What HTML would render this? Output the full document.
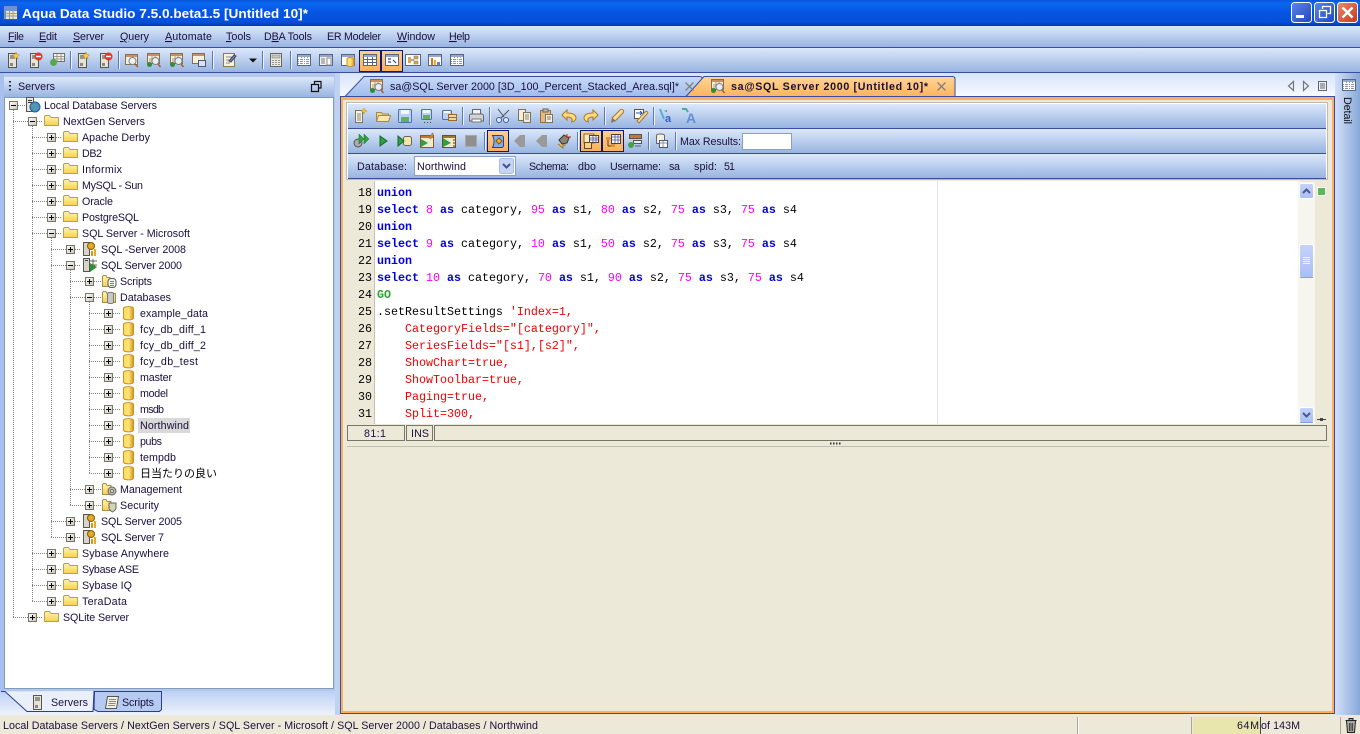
<!DOCTYPE html>
<html><head><meta charset="utf-8"><title>Aqua Data Studio</title>
<style>
html,body{margin:0;padding:0;background:#ece9d8;overflow:hidden}
svg{display:block;position:absolute;left:0;top:0}
text{font-family:"Liberation Sans","Noto Sans CJK JP",sans-serif;font-size:10.7px;fill:#1a0f3c}
.c text,text.c{font-family:"Liberation Mono",monospace;font-size:11.67px;fill:#000}
.k{fill:#0000e0;font-weight:bold}
.n{fill:#ff00ff}
.r{fill:#f00000}
.g{fill:#2f9f2f;font-weight:bold}
</style></head><body>
<svg width="1360" height="734" viewBox="0 0 1360 734" xmlns="http://www.w3.org/2000/svg">
<defs>
<linearGradient id="title" x1="0" y1="0" x2="0" y2="1"><stop offset="0" stop-color="#0a56d8"/><stop offset=".12" stop-color="#0a66f0"/><stop offset=".5" stop-color="#0554e2"/><stop offset=".85" stop-color="#0450d8"/><stop offset="1" stop-color="#003cb0"/></linearGradient>
<linearGradient id="bar" x1="0" y1="0" x2="0" y2="1"><stop offset="0" stop-color="#dce8fb"/><stop offset="1" stop-color="#98b4e0"/></linearGradient>
<linearGradient id="tabrow" x1="0" y1="0" x2="0" y2="1"><stop offset="0" stop-color="#d7e4fa"/><stop offset="1" stop-color="#f8fafe"/></linearGradient>
<linearGradient id="tab1" x1="0" y1="0" x2="0" y2="1"><stop offset="0" stop-color="#c8daf8"/><stop offset="1" stop-color="#a0bcec"/></linearGradient>
<linearGradient id="tab2" x1="0" y1="0" x2="0" y2="1"><stop offset="0" stop-color="#ffd596"/><stop offset="1" stop-color="#fdb45e"/></linearGradient>
<linearGradient id="side" x1="0" y1="0" x2="1" y2="0"><stop offset="0" stop-color="#d2e0f8"/><stop offset="1" stop-color="#88a8d8"/></linearGradient>
<linearGradient id="lower" x1="0" y1="0" x2="0" y2="1"><stop offset="0" stop-color="#bdd0f4"/><stop offset="1" stop-color="#edf2fb"/></linearGradient>
<linearGradient id="fgrad" x1="0" y1="0" x2="0" y2="1"><stop offset="0" stop-color="#fff5b0"/><stop offset="1" stop-color="#f5d050"/></linearGradient>
<linearGradient id="dbg" x1="0" y1="0" x2="1" y2="0"><stop offset="0" stop-color="#ffd84c"/><stop offset=".5" stop-color="#ffe680"/><stop offset="1" stop-color="#d8960c"/></linearGradient>
<linearGradient id="bb" x1="0" y1="0" x2="1" y2="1"><stop offset="0" stop-color="#fff"/><stop offset="1" stop-color="#c8c4b4"/></linearGradient>
<linearGradient id="sel" x1="0" y1="0" x2="0" y2="1"><stop offset="0" stop-color="#ffd090"/><stop offset="1" stop-color="#fdae5c"/></linearGradient>
<linearGradient id="sb" x1="0" y1="0" x2="0" y2="1"><stop offset="0" stop-color="#c6d3fb"/><stop offset="1" stop-color="#aabef5"/></linearGradient>
<linearGradient id="btn" x1="0" y1="0" x2="1" y2="1"><stop offset="0" stop-color="#5c86ea"/><stop offset="1" stop-color="#2046c0"/></linearGradient>
<linearGradient id="close" x1="0" y1="0" x2="1" y2="1"><stop offset="0" stop-color="#ec8a6a"/><stop offset="1" stop-color="#c23a18"/></linearGradient>

<g id="minus"><rect x=".5" y=".5" width="8" height="8" fill="url(#bb)" stroke="#77756a"/><path d="M2 4.500h5" stroke="#000"/></g>
<g id="plus"><rect x=".5" y=".5" width="8" height="8" fill="url(#bb)" stroke="#77756a"/><path d="M2 4.500h5M4.500 2v5" stroke="#000"/></g>
<g id="folder"><path d="M.5 3.500V12.500H14.500V4.500H7L5.500 2.500H1.500z" fill="url(#fgrad)" stroke="#b8a050"/></g>
<g id="db"><path d="M1.500 2.500C1.500 0 11.500 0 11.500 2.500V12C11.500 14.500 1.500 14.500 1.500 12z" fill="url(#dbg)" stroke="#c8922a"/></g>
<g id="sqlicon"><rect x="1.500" y="1.500" width="6" height="13" fill="#d8d4c8" stroke="#555"/><rect x="3" y="3" width="3" height="1" fill="#444"/><path d="M8 4h7M8 8h7M11 2v10" stroke="#665" fill="none"/><path d="M8 6l7 4-7 5z" fill="#2d9030"/></g>
<g id="sqlicon2"><rect x="1.500" y="1.500" width="6" height="13" fill="#d8d4c8" stroke="#555"/><circle cx="9" cy="5" r="3.500" fill="#e8a820" stroke="#7a5a10"/><rect x="9" y="10" width="2" height="5" fill="#d89a10"/><rect x="12" y="8" width="2" height="7" fill="#e8a820"/></g>
<g id="scripts"><path d="M.5 3.500V13.500H8V4.500H5L4 2.500H1.500z" fill="url(#fgrad)" stroke="#a09050"/><rect x="6" y="5.500" width="8" height="9" rx="3" fill="#f8f6f0" stroke="#555"/><path d="M8 8.500h4M8 10.500h4M8 12.500h4" stroke="#6a7ab0"/></g>
<g id="dbs"><path d="M.5 3.500V13.500H13.500V4.500H5L4 2.500H1.500z" fill="url(#fgrad)" stroke="#a09050"/><path d="M5.500 4.500C5.500 3 11.500 3 11.500 4.500V13C11.500 15 5.500 15 5.500 13z" fill="#c8c8c8" stroke="#777"/></g>
<g id="gear"><path d="M.5 3.500V13.500H9V4.500H5L4 2.500H1.500z" fill="url(#fgrad)" stroke="#a09050"/><circle cx="10" cy="10" r="4" fill="#c4bfa8" stroke="#666"/><circle cx="10" cy="10" r="1.500" fill="#fff" stroke="#666"/></g>
<g id="shield"><path d="M.5 3.500V13.500H9V4.500H5L4 2.500H1.500z" fill="url(#fgrad)" stroke="#a09050"/><path d="M7 6h7v5c0 2-2 3-3.500 4C9 14 7 13 7 11z" fill="#d8d2b4" stroke="#666"/></g>
<g id="root"><rect x="1.500" y=".5" width="7" height="14" fill="#e8e6dc" stroke="#555"/><rect x="3" y="3" width="4" height="1" fill="#333"/><rect x="3" y="5" width="4" height="1" fill="#333"/><circle cx="10" cy="10" r="5" fill="#4a90c8" stroke="#24608c"/><path d="M7 9c2-2 3 0 5-1M8 13c2-1 2-3 4-2" stroke="#60b050" fill="none"/></g>

<g id="srv"><rect x="3.500" y="1.500" width="8" height="14" fill="#e8e4d4" stroke="#555"/><path d="M5 4h5M5 6h5" stroke="#444"/><rect x="5" y="11" width="3" height="3" fill="#888"/></g>
<g id="srvn"><use href="#srv"/><path d="M11 0l1 2.500 2.500.5-2 1.500.5 2.500-2-1.500-2 1.500.5-2.500-2-1.500 2.500-.5z" fill="#ffd040" stroke="#b08820" stroke-width=".5"/></g>
<g id="srvx"><use href="#srv"/><circle cx="11.500" cy="4.500" r="4" fill="#e03828"/><path d="M9 4.500h5" stroke="#fff" stroke-width="1.500"/></g>
<g id="grid"><rect x="1.500" y="2.500" width="13" height="11" fill="#f6f4ec" stroke="#6a6a70"/><rect x="2" y="3" width="12" height="2" fill="#8a98c8"/><path d="M2 7.500h12M2 10.500h12M5.500 5v8M8.500 5v8M11.500 5v8" stroke="#9aa0b8"/></g>
<g id="gridgr"><rect x="4.500" y="1.500" width="11" height="8" fill="#f6f4ec" stroke="#70706a"/><path d="M5 4.500h10M5 7h10M8 2v7M12 2v7" stroke="#a09888"/><circle cx="4.500" cy="10.500" r="3.500" fill="#54a850"/></g>
<g id="mag"><rect x="1.500" y="2.500" width="12" height="10" fill="#f4efe0" stroke="#8a7048"/><rect x="2" y="3" width="11" height="2" fill="#c89060"/><circle cx="8.500" cy="9" r="3.500" fill="#eef2f8" stroke="#808080"/><path d="M11 12l3 3" stroke="#a06030" stroke-width="1.500"/></g>
<g id="magb"><rect x="1.500" y="1.500" width="12" height="10" fill="#f4efe0" stroke="#8a7048"/><rect x="2" y="2" width="11" height="2" fill="#c89060"/><path d="M3 7h9M3 9h9M6 4v7M9 4v7" stroke="#b09878"/><circle cx="9.500" cy="9" r="3.500" fill="#e8eef4" stroke="#808080"/><path d="M12 12l2.500 3" stroke="#a06030" stroke-width="1.500"/><circle cx="3.500" cy="12.500" r="2.500" fill="#308a38"/></g>
<g id="win"><rect x="1.500" y="1.500" width="12" height="10" fill="#f4efe0" stroke="#8a7048"/><rect x="2" y="2" width="11" height="2" fill="#c89060"/><rect x="7.500" y="8.500" width="7" height="6" fill="#d8e4f4" stroke="#557"/></g>
<g id="note"><rect x="2.500" y="1.500" width="11" height="13" fill="#f8f2dc" stroke="#8a7a50"/><path d="M5 5h6M5 8h6M5 11h4" stroke="#8a8a8a"/><path d="M8 9l5-6 2 1-5 6z" fill="#6a90c8" stroke="#445"/></g>
<g id="calc"><rect x="2.500" y="1.500" width="11" height="13" fill="#eceae0" stroke="#666"/><rect x="4" y="3" width="8" height="3" fill="#c8c8c0" stroke="#777" stroke-width=".5"/><path d="M4.500 8.500h1M7.500 8.500h1M10.500 8.500h1M4.500 10.500h1M7.500 10.500h1M10.500 10.500h1M4.500 12.500h1M7.500 12.500h1M10.500 12.500h1" stroke="#444"/></g>
<g id="table"><rect x="1.500" y="2.500" width="13" height="11" fill="#fff" stroke="#556680"/><rect x="2" y="3" width="12" height="2" fill="#98a8cc"/><path d="M2 7.500h12M2 9.500h12M2 11.500h12M5.500 5v8M8.500 5v8M11.500 5v8" stroke="#8a94b0" stroke-dasharray="1 1"/></g>
<g id="form"><rect x="1.500" y="2.500" width="13" height="11" fill="#f4f4ec" stroke="#556680"/><rect x="2" y="3" width="12" height="2" fill="#98a8cc"/><rect x="9" y="6" width="4" height="7" fill="#fff" stroke="#889"/><path d="M3 7h4M3 9h4M3 11h4" stroke="#777"/></g>
<g id="tdb"><rect x="1.500" y="2.500" width="13" height="11" fill="#fff" stroke="#556680"/><rect x="2" y="3" width="12" height="2" fill="#98a8cc"/><path d="M7 7c0-2 7-2 7 0v6c0 2-7 2-7 0z" fill="url(#dbg)" stroke="#c8922a"/></g>
<g id="tgrid"><rect x="1.500" y="2.500" width="13" height="11" fill="#fff" stroke="#556680"/><rect x="2" y="3" width="12" height="2" fill="#98a8cc"/><path d="M2 7.500h12M2 10.500h12M5.500 5v8M10.500 5v8" stroke="#556680"/></g>
<g id="tbuild"><rect x="1.500" y="2.500" width="13" height="11" fill="#fff" stroke="#556680"/><rect x="2" y="3" width="12" height="2" fill="#98a8cc"/><path d="M4 7h3M4 10h3M9 8l3 3" stroke="#2a4a90" stroke-width="1.200"/></g>
<g id="ttree"><rect x=".5" y="2.500" width="15" height="11" fill="#fff" stroke="#556680"/><rect x="3" y="5" width="3" height="6" fill="#d8a848"/><rect x="9" y="4" width="4" height="3" fill="#d8a848" stroke="#777" stroke-width=".5"/><rect x="9" y="9" width="4" height="3" fill="#d8a848" stroke="#777" stroke-width=".5"/><path d="M6 8h3" stroke="#555"/></g>
<g id="tbar"><rect x="1.500" y="2.500" width="13" height="11" fill="#fff" stroke="#556680"/><rect x="2" y="3" width="12" height="2" fill="#98a8cc"/><rect x="4" y="6" width="2" height="7" fill="#e07020"/><rect x="7" y="8" width="2" height="5" fill="#e8b020"/><rect x="10" y="10" width="3" height="3" fill="#6080c0"/></g>
<g id="newdoc"><path d="M3.500 2.500h7v12h-7z" fill="#f8f2e0" stroke="#7a7458"/><path d="M5 6h4M5 8h4M5 10h4M5 12h4" stroke="#888"/><path d="M12 0l1 2 2 1-2 1-1 2-1-2-2-1 2-1z" fill="#f8c830" stroke="#b89020" stroke-width=".5"/></g>
<g id="open"><path d="M1.500 4.500h5l1 1.500h6v7h-12z" fill="#f0d890" stroke="#a08a50"/><path d="M1.500 13.500l2-6h12l-2 6z" fill="#fbe8a4" stroke="#a08a50"/></g>
<g id="save"><rect x="1.500" y="1.500" width="13" height="13" rx="1" fill="#bcd0f0" stroke="#5070b0"/><rect x="4" y="2" width="8" height="4" fill="#f4f6fa"/><rect x="4" y="9" width="8" height="5" fill="#60b060"/></g>
<g id="saveas"><rect x="2.500" y="1.500" width="10" height="10" rx="1" fill="#bcd0f0" stroke="#5070b0"/><rect x="4" y="2" width="7" height="3" fill="#f4f6fa"/><rect x="4" y="7" width="7" height="4" fill="#60b060"/><path d="M5 14.500h1M8 14.500h1M11 14.500h1" stroke="#444"/></g>
<g id="saveall"><rect x="1.500" y="2.500" width="9" height="9" rx="1" fill="#bcd0f0" stroke="#5070b0"/><rect x="3" y="3" width="6" height="2" fill="#fff"/><rect x="7.500" y="6.500" width="8" height="6" fill="#f4d49c" stroke="#a06828"/><path d="M8 9.500h7" stroke="#a06828"/></g>
<g id="print"><rect x="4.500" y="1.500" width="8" height="6" fill="#f4f4f4" stroke="#666"/><path d="M1.500 8c0-2 2-2 2-2h10s2 0 2 2v5h-14z" fill="#cfd4dc" stroke="#666"/><rect x="4" y="11" width="9" height="3" fill="#fff" stroke="#777"/></g>
<g id="cut"><path d="M3 1l6 8M14 2L6 10" stroke="#555" fill="none"/><circle cx="4" cy="12" r="2.500" fill="#dfe8f8" stroke="#3a5ca0"/><circle cx="11" cy="12" r="2.500" fill="#dfe8f8" stroke="#3a5ca0"/></g>
<g id="copy"><path d="M1.500 1.500h7v11h-7z" fill="#f6eed8" stroke="#7a7458"/><path d="M6.500 4.500h7v10h-7z" fill="#f6eed8" stroke="#7a7458"/><path d="M8 7h4M8 9h4M8 11h4" stroke="#888"/></g>
<g id="paste"><rect x="1.500" y="2.500" width="10" height="12" fill="#e8b87c" stroke="#907040"/><rect x="4" y="1" width="5" height="3" fill="#bbb" stroke="#666"/><path d="M6.500 6.500h7v8h-7z" fill="#f8f2e0" stroke="#7a7458"/><path d="M8 9h4M8 11h4" stroke="#777"/></g>
<g id="undo"><path d="M1 7l5-5v3c4 0 9 1 9 5 0 2-2 4-5 4 2-1 2-5-4-5v3z" fill="#fbdc80" stroke="#b07820"/></g>
<g id="redo"><path d="M15 7l-5-5v3c-4 0-9 1-9 5 0 2 2 4 5 4-2-1-2-5 4-5v3z" fill="#fbdc80" stroke="#b07820"/></g>
<g id="pencil"><path d="M2 10l8-8c2-2 5 1 3 3l-8 8z" fill="#fbdc90" stroke="#a07a40"/><path d="M2 10l3 3-4 2z" fill="#8a6a58"/></g>
<g id="pencil2"><rect x="1.500" y="1.500" width="9" height="9" fill="#fff" stroke="#555"/><path d="M3 5h6l-2-2M9 5l-2 2" stroke="#2050a0" fill="none"/><path d="M4 13l8-9c2-2 4 1 2 2l-8 9z" fill="#fbdc90" stroke="#a07a40"/></g>
<g id="aa1"><path d="M1 1l4 10" stroke="#50b0d8" stroke-width="2"/><path d="M5 3l3-1v2z" fill="#50a040"/><text x="6" y="14" style="font-size:11px;fill:#3860c8;font-weight:bold">a</text></g>
<g id="aa2"><text x="5" y="15" style="font-size:14px;fill:#6090d8;font-weight:bold">A</text><path d="M1 1h4l2 3" stroke="#50a890" stroke-width="2" fill="none"/></g>
<g id="run2"><circle cx="5" cy="10" r="4" fill="#aaa" stroke="#555"/><path d="M6 1l5 5-5 5zM11 1l5 5-5 5z" fill="#30a040" stroke="#18682a" stroke-width=".5"/></g>
<g id="run"><path d="M5 3l7 5-7 5z" fill="#30a040" stroke="#18682a"/></g>
<g id="runm"><rect x="6.500" y="3.500" width="8" height="9" rx="2" fill="#f4e6a8" stroke="#666"/><path d="M1 3l6 5-6 5z" fill="#30a040" stroke="#18682a"/></g>
<g id="runp"><rect x="1.500" y="2.500" width="13" height="12" fill="#f0ead0" stroke="#8a5a28"/><rect x="2" y="3" width="12" height="2" fill="#b87830"/><path d="M2 6l7 4-7 4z" fill="#30a040"/><path d="M14 0l-3 6" stroke="#c08040" stroke-width="2"/></g>
<g id="runq"><rect x="1.500" y="2.500" width="13" height="12" fill="#f0ead0" stroke="#5a5a28"/><rect x="2" y="3" width="12" height="2" fill="#987830"/><path d="M2 5l8 5-8 4z" fill="#30a040"/><path d="M12 7h2M12 10h2M12 13h2" stroke="#c06010" stroke-width="1.500"/></g>
<g id="stop"><rect x="2.500" y="2.500" width="11" height="11" fill="#8f8f8f" stroke="#a8a8a8"/></g>
<g id="conn"><path d="M2.500 2.500h9c2 0 2 2 2 2v8c0 2-2 2-2 2h-9c2-3 2-9 0-12z" fill="#7fb0e8" stroke="#204890"/><path d="M6 8l3-3 3 3-3 3z" fill="#f8b030" stroke="#905010"/></g>
<g id="lt"><path d="M2 8l6-6h5v12H8z" fill="#9a9a9a"/></g>
<g id="plug"><path d="M3 7l5-5 5 3-2 5-5 1z" fill="#8a8470" stroke="#333"/><path d="M11 1v4M15 4h-4" stroke="#d02020"/><path d="M2 11l5 4v-3h3" fill="#f8c848" stroke="#a07020"/></g>
<g id="sel1"><rect x="1" y="1" width="10" height="9" fill="#f8e8c0" stroke="#8a6a28"/><rect x="6.500" y="2.500" width="9" height="7" fill="#fff" stroke="#444"/><path d="M7 5h8M7 7h8M10 3v6M13 3v6" stroke="#6a70a0"/><rect x="1.500" y="9.500" width="7" height="6" fill="#f6d090" stroke="#6a4a18"/></g>
<g id="sel2"><rect x="6.500" y="1.500" width="9" height="9" fill="#fff" stroke="#444"/><path d="M7 4h8M7 7h8M10 2v8M13 2v8" stroke="#6a70a0"/><path d="M1.500 5.500h4M3 6v7M3 13h4" stroke="#5a3a10"/><rect x="1" y="4" width="4" height="3" fill="#e09040"/><rect x="6" y="11" width="4" height="3" fill="#e09040"/></g>
<g id="rs"><rect x="2.500" y="1.500" width="12" height="4" fill="#c87830" stroke="#555"/><rect x="6.500" y="7.500" width="8" height="3" fill="#eee" stroke="#555"/><circle cx="4" cy="12" r="3" fill="#48a048"/><path d="M8 13h6" stroke="#666"/></g>
<g id="script"><path d="M3.500 2.500c0-2 8-2 8 0v8h-8z" fill="#f4f0e4" stroke="#666"/><rect x="6.500" y="7.500" width="8" height="7" fill="#fff" stroke="#557"/><path d="M7 10h7M10 8v6" stroke="#79a"/></g>
<g id="sep"><path d="M.5 0v18" stroke="#5c78b8"/><path d="M1.500 0v18" stroke="#eef3fc"/></g>
<g id="x"><path d="M.5.5l8 8M8.500.5l-8 8" stroke="#808080" stroke-width="1.300"/></g>
<g id="selb"><rect x=".5" y=".5" width="21" height="21" fill="url(#sel)" stroke="#0a1a70"/></g>
</defs>

<!-- Title bar -->
<rect width="1360" height="26" fill="url(#title)"/>
<g transform="translate(3,5)"><rect x=".5" y=".5" width="14" height="14" fill="#6f93cc" stroke="#345a9c"/><rect x="3" y="6" width="11" height="8" fill="#f6e6b4"/><path d="M3 8.500h11M3 11h11M6.500 6v8M10 6v8" stroke="#8a9ec0"/></g>
<text x="22" y="18" textLength="286" lengthAdjust="spacingAndGlyphs" style="font-size:13px;font-weight:bold;fill:#fff">Aqua Data Studio 7.5.0.beta1.5 [Untitled 10]*</text>
<rect x="1291.500" y="2.500" width="20" height="20" rx="3" fill="url(#btn)" stroke="#fff"/><rect x="1296" y="15" width="8" height="3" fill="#fff"/>
<rect x="1314.500" y="2.500" width="20" height="20" rx="3" fill="url(#btn)" stroke="#fff"/><path d="M1322.500 9V6.500h8v7h-3M1319.500 10.500h7v7h-7z" fill="none" stroke="#fff" stroke-width="1.300"/>
<rect x="1337.500" y="2.500" width="20" height="20" rx="3" fill="url(#close)" stroke="#fff"/><path d="M1342.500 7.500l10 10M1352.500 7.500l-10 10" stroke="#fff" stroke-width="2.400"/>

<!-- Menu -->
<rect y="26" width="1360" height="21" fill="url(#bar)"/>
<rect y="47" width="1360" height="1" fill="#3a4ea0"/>
<g>
<text x="8" y="40" textLength="16"><tspan text-decoration="underline">F</tspan>ile</text>
<text x="39" y="40" textLength="18"><tspan text-decoration="underline">E</tspan>dit</text>
<text x="73" y="40" textLength="31"><tspan text-decoration="underline">S</tspan>erver</text>
<text x="120" y="40" textLength="29"><tspan text-decoration="underline">Q</tspan>uery</text>
<text x="165" y="40" textLength="47"><tspan text-decoration="underline">A</tspan>utomate</text>
<text x="226" y="40" textLength="25"><tspan text-decoration="underline">T</tspan>ools</text>
<text x="264" y="40" textLength="48">D<tspan text-decoration="underline">B</tspan>A Tools</text>
<text x="327" y="40" textLength="54">ER Modeler</text>
<text x="397" y="40" textLength="38"><tspan text-decoration="underline">W</tspan>indow</text>
<text x="449" y="40" textLength="21"><tspan text-decoration="underline">H</tspan>elp</text>
</g>

<!-- Main toolbar -->
<rect y="48" width="1360" height="24" fill="url(#bar)"/>
<rect y="72" width="1360" height="1" fill="#3a4ea0"/>
<use href="#srvn" x="5" y="52"/><use href="#srvx" x="27" y="52"/><use href="#gridgr" x="49" y="52"/>
<use href="#sep" x="70" y="51"/>
<use href="#srvn" x="75" y="52"/><use href="#srvx" x="97" y="52"/>
<use href="#sep" x="118" y="51"/>
<use href="#mag" x="124" y="52"/><use href="#magb" x="146" y="52"/><use href="#magb" x="169" y="52"/><use href="#win" x="191" y="52"/>
<use href="#sep" x="212" y="51"/>
<use href="#note" x="221" y="52"/><path d="M249 58.500h8l-4 4z" fill="#111"/>
<use href="#sep" x="262" y="51"/>
<use href="#calc" x="268" y="52"/>
<use href="#sep" x="290" y="51"/>
<use href="#table" x="296" y="52"/><use href="#form" x="318" y="52"/><use href="#tdb" x="340" y="52"/>
<use href="#selb" x="359" y="50"/><use href="#selb" x="381" y="50"/>
<use href="#tgrid" x="362" y="52"/><use href="#tbuild" x="384" y="52"/>
<use href="#ttree" x="405" y="52"/><use href="#tbar" x="427" y="52"/><use href="#table" x="449" y="52"/>

<!-- Left panel -->
<rect y="73" width="340" height="642" fill="#b4c8ee"/>
<rect x="0" y="73" width="4" height="642" fill="#a8c0ee"/>
<rect x="335" y="73" width="5" height="642" fill="#c0d2f2"/>
<rect x="4" y="77" width="330" height="20" fill="url(#bar)"/>
<path d="M10 81v1.500M10 85v1.500M10 89v1.500" stroke="#223" stroke-width="2"/>
<text x="18" y="90" textLength="37">Servers</text>
<path d="M311.500 84.500h7v7h-7zM314.500 84v-2.500h6.500v6.500h-2" fill="none" stroke="#111" stroke-width="1.200"/>
<rect x="4.500" y="97.500" width="329" height="591" fill="#fff" stroke="#7f9db9"/>

<!-- tree lines -->
<g stroke="#808080" stroke-dasharray="1 1" fill="none">
<path d="M13.500 110V617M32.500 126V601M51.500 238V537M70.500 270V505M89.500 302V473"/>
<path d="M18 105.500h7M13 121.500h15M37 121.500h6M13 617.500h15M37 617.500h6"/>
<path d="M32 137.500h15M32 153.500h15M32 169.500h15M32 185.500h15M32 201.500h15M32 217.500h15M32 233.500h15M32 553.500h15M32 569.500h15M32 585.500h15M32 601.500h15"/>
<path d="M56 137.500h6M56 153.500h6M56 169.500h6M56 185.500h6M56 201.500h6M56 217.500h6M56 233.500h6M56 553.500h6M56 569.500h6M56 585.500h6M56 601.500h6"/>
<path d="M51 249.500h15M51 265.500h15M51 521.500h15M51 537.500h15M75 249.500h6M75 265.500h6M75 521.500h6M75 537.500h6"/>
<path d="M70 281.500h15M70 297.500h15M70 489.500h15M70 505.500h15M94 281.500h7M94 297.500h7M94 489.500h7M94 505.500h7"/>
<path d="M89 313.500h15M89 329.500h15M89 345.500h15M89 361.500h15M89 377.500h15M89 393.500h15M89 409.500h15M89 425.500h15M89 441.500h15M89 457.500h15M89 473.500h15"/>
<path d="M113 313.500h8M113 329.500h8M113 345.500h8M113 361.500h8M113 377.500h8M113 393.500h8M113 409.500h8M113 425.500h8M113 441.500h8M113 457.500h8M113 473.500h8"/>
</g>

<!-- tree boxes -->
<use href="#minus" x="9" y="101"/><use href="#minus" x="28" y="117"/><use href="#plus" x="28" y="613"/>
<use href="#plus" x="47" y="133"/><use href="#plus" x="47" y="149"/><use href="#plus" x="47" y="165"/><use href="#plus" x="47" y="181"/><use href="#plus" x="47" y="197"/><use href="#plus" x="47" y="213"/><use href="#minus" x="47" y="229"/><use href="#plus" x="47" y="549"/><use href="#plus" x="47" y="565"/><use href="#plus" x="47" y="581"/><use href="#plus" x="47" y="597"/>
<use href="#plus" x="66" y="245"/><use href="#minus" x="66" y="261"/><use href="#plus" x="66" y="517"/><use href="#plus" x="66" y="533"/>
<use href="#plus" x="85" y="277"/><use href="#minus" x="85" y="293"/><use href="#plus" x="85" y="485"/><use href="#plus" x="85" y="501"/>
<use href="#plus" x="104" y="309"/><use href="#plus" x="104" y="325"/><use href="#plus" x="104" y="341"/><use href="#plus" x="104" y="357"/><use href="#plus" x="104" y="373"/><use href="#plus" x="104" y="389"/><use href="#plus" x="104" y="405"/><use href="#plus" x="104" y="421"/><use href="#plus" x="104" y="437"/><use href="#plus" x="104" y="453"/><use href="#plus" x="104" y="469"/>

<!-- tree icons -->
<use href="#root" x="25" y="97"/>
<use href="#folder" x="44" y="113"/><use href="#folder" x="44" y="609"/>
<use href="#folder" x="63" y="129"/><use href="#folder" x="63" y="145"/><use href="#folder" x="63" y="161"/><use href="#folder" x="63" y="177"/><use href="#folder" x="63" y="193"/><use href="#folder" x="63" y="209"/><use href="#folder" x="63" y="225"/><use href="#folder" x="63" y="545"/><use href="#folder" x="63" y="561"/><use href="#folder" x="63" y="577"/><use href="#folder" x="63" y="593"/>
<use href="#sqlicon2" x="82" y="241"/><use href="#sqlicon" x="82" y="257"/><use href="#sqlicon2" x="82" y="513"/><use href="#sqlicon2" x="82" y="529"/>
<use href="#scripts" x="102" y="273"/><use href="#dbs" x="102" y="289"/><use href="#gear" x="102" y="481"/><use href="#shield" x="102" y="497"/>
<use href="#db" x="122" y="306"/><use href="#db" x="122" y="322"/><use href="#db" x="122" y="338"/><use href="#db" x="122" y="354"/><use href="#db" x="122" y="370"/><use href="#db" x="122" y="386"/><use href="#db" x="122" y="402"/><use href="#db" x="122" y="418"/><use href="#db" x="122" y="434"/><use href="#db" x="122" y="450"/><use href="#db" x="122" y="466"/>

<rect x="138" y="418" width="52" height="15" fill="#d9d9d9"/>

<!-- tree text -->
<g>
<text x="44" y="109" textLength="113">Local Database Servers</text>
<text x="63" y="125" textLength="82">NextGen Servers</text>
<text x="82" y="141" textLength="68">Apache Derby</text>
<text x="82" y="157" textLength="20">DB2</text>
<text x="82" y="173" textLength="40">Informix</text>
<text x="82" y="189" textLength="61">MySQL - Sun</text>
<text x="82" y="205" textLength="31">Oracle</text>
<text x="82" y="221" textLength="57">PostgreSQL</text>
<text x="82" y="237" textLength="108">SQL Server - Microsoft</text>
<text x="101" y="253" textLength="85">SQL -Server 2008</text>
<text x="101" y="269" textLength="81">SQL Server 2000</text>
<text x="120" y="285" textLength="32">Scripts</text>
<text x="120" y="301" textLength="51">Databases</text>
<text x="140" y="317" textLength="68">example_data</text>
<text x="140" y="333" textLength="66">fcy_db_diff_1</text>
<text x="140" y="349" textLength="66">fcy_db_diff_2</text>
<text x="140" y="365" textLength="58">fcy_db_test</text>
<text x="140" y="381" textLength="32">master</text>
<text x="140" y="397" textLength="28">model</text>
<text x="140" y="413" textLength="24">msdb</text>
<text x="140" y="429" textLength="49">Northwind</text>
<text x="140" y="445" textLength="22">pubs</text>
<text x="140" y="461" textLength="36">tempdb</text>
<text x="140" y="477" textLength="77" style="fill:#000;font-size:11px">日当たりの良い</text>
<text x="120" y="493" textLength="62">Management</text>
<text x="120" y="509" textLength="39">Security</text>
<text x="101" y="525" textLength="81">SQL Server 2005</text>
<text x="101" y="541" textLength="63">SQL Server 7</text>
<text x="82" y="557" textLength="87">Sybase Anywhere</text>
<text x="82" y="573" textLength="57">Sybase ASE</text>
<text x="82" y="589" textLength="50">Sybase IQ</text>
<text x="82" y="605" textLength="45">TeraData</text>
<text x="63" y="621" textLength="66">SQLite Server</text>
</g>

<!-- bottom tabs -->
<rect x="0" y="691" width="335" height="24" fill="url(#lower)"/>
<path d="M1 691.500h4L27 711.500h66l1-20v-.5" fill="#eaf0fb" stroke="#2a3c96"/>
<path d="M94.500 691.500h67v18l-2 2H98l-4-2z" fill="#b6cbf3" stroke="#2a3c96"/>
<use href="#srv" x="30" y="694"/>
<text x="51" y="706" textLength="37">Servers</text>
<g transform="translate(104,694)"><path d="M3.500 2.500h11l-2 12H1.500z" fill="#f4f0e0" stroke="#555"/><path d="M5 5.500h7M5 7.500h7M4.500 9.500h7M4 11.500h7" stroke="#888"/></g>
<text x="122" y="706" textLength="32">Scripts</text>

<!-- Right side tab row -->
<rect x="340" y="73" width="995" height="24" fill="url(#tabrow)"/>
<path d="M345 96.500L364 76.500H699.500q3 0 3 3L686 96.500z" fill="url(#tab1)" stroke="#3a4ea0"/>
<path d="M686 96.500L704 76.500H952.500q2.500 0 2.500 2.500V96.500z" fill="url(#tab2)" stroke="#3a4ea0"/>
<use href="#magb" x="369" y="78"/>
<text x="390" y="90" textLength="289">sa@SQL Server 2000 [3D_100_Percent_Stacked_Area.sql]*</text>
<use href="#x" x="685" y="82"/>
<use href="#magb" x="710" y="78"/>
<text x="731" y="90" textLength="197" style="font-weight:bold">sa@SQL Server 2000 [Untitled 10]*</text>
<use href="#x" x="937" y="82"/>
<path d="M1293.500 81.500l-5 4.500 5 4.500zM1303.500 81.500l5 4.500-5 4.500z" fill="none" stroke="#777" stroke-width="1.200"/>
<rect x="1318.500" y="81.500" width="8" height="9" fill="none" stroke="#666"/><path d="M1320 84h5M1320 86h5M1320 88h5" stroke="#666"/>

<!-- Main right panel -->
<rect x="340" y="96" width="995" height="618" fill="#3a4ea0"/>
<rect x="341" y="97" width="993" height="616" fill="#fdae5c"/>
<rect x="343" y="100" width="989" height="611" fill="#ece9d8"/>
<rect x="346.500" y="102.500" width="981" height="77" fill="#fff" stroke="#bcbcb0"/>
<rect x="348" y="104" width="978" height="24" fill="url(#bar)"/><rect x="348" y="128" width="978" height="1" fill="#3a4ea0"/>
<rect x="348" y="129" width="978" height="24" fill="url(#bar)"/><rect x="348" y="153" width="978" height="1" fill="#3a4ea0"/>
<rect x="348" y="154" width="978" height="24" fill="url(#bar)"/><rect x="348" y="178" width="978" height="1" fill="#3a4ea0"/>

<!-- Editor toolbar 1 -->
<use href="#newdoc" x="352" y="108"/><use href="#open" x="375" y="108"/><use href="#save" x="397" y="108"/><use href="#saveas" x="419" y="108"/><use href="#saveall" x="441" y="108"/>
<use href="#sep" x="462" y="107"/>
<use href="#print" x="468" y="108"/>
<use href="#sep" x="489" y="107"/>
<use href="#cut" x="495" y="108"/><use href="#copy" x="517" y="108"/><use href="#paste" x="539" y="108"/><use href="#undo" x="561" y="108"/><use href="#redo" x="583" y="108"/>
<use href="#sep" x="604" y="107"/>
<use href="#pencil" x="610" y="108"/><use href="#pencil2" x="633" y="108"/>
<use href="#sep" x="653" y="107"/>
<use href="#aa1" x="659" y="108"/><use href="#aa2" x="681" y="108"/>

<!-- Editor toolbar 2 -->
<use href="#run2" x="353" y="133"/><use href="#run" x="375" y="133"/><use href="#runm" x="397" y="133"/><use href="#runp" x="419" y="133"/><use href="#runq" x="441" y="133"/><use href="#stop" x="463" y="133"/>
<use href="#sep" x="484" y="132"/>
<use href="#selb" x="487" y="130"/><use href="#conn" x="490" y="133"/>
<use href="#lt" x="512" y="133"/><use href="#lt" x="534" y="133"/><use href="#plug" x="556" y="133"/>
<use href="#sep" x="577" y="132"/>
<use href="#selb" x="580" y="130"/><use href="#selb" x="602" y="130"/>
<use href="#sel1" x="583" y="133"/><use href="#sel2" x="605" y="133"/>
<use href="#rs" x="627" y="133"/>
<use href="#sep" x="648" y="132"/>
<use href="#script" x="653" y="133"/>
<use href="#sep" x="675" y="132"/>
<text x="680" y="145" textLength="61">Max Results:</text>
<rect x="742.500" y="133.500" width="49" height="16" fill="#fff" stroke="#8aa0c0"/>

<!-- Editor toolbar 3 -->
<text x="357" y="170" textLength="50">Database:</text>
<rect x="414.500" y="156.500" width="101" height="19" fill="#fff" stroke="#8aa0c8"/>
<text x="417" y="170" textLength="49">Northwind</text>
<rect x="499.500" y="158.500" width="14" height="15" rx="2" fill="#c4d3f6" stroke="#a8bce8"/>
<path d="M503 164l3.500 3.500 3.500-3.500" fill="none" stroke="#3c5488" stroke-width="2"/>
<text x="529" y="170" textLength="40">Schema:</text>
<text x="578" y="170" textLength="18">dbo</text>
<text x="610" y="170" textLength="51">Username:</text>
<text x="669" y="170" textLength="11">sa</text>
<text x="694" y="170" textLength="23">spid:</text>
<text x="724" y="170" textLength="11">51</text>

<!-- Editor -->
<rect x="347" y="181" width="952" height="243" fill="#fff"/>
<rect x="347" y="181" width="27" height="243" fill="#ece9d8"/>
<rect x="374" y="181" width="1" height="243" fill="#c4c2b6"/>
<rect x="937" y="181" width="1" height="243" fill="#e4e4e4"/>
<g class="c">
<text x="358" y="196">18</text><text x="358" y="213">19</text><text x="358" y="230">20</text><text x="358" y="247">21</text><text x="358" y="264">22</text><text x="358" y="281">23</text><text x="358" y="298">24</text><text x="358" y="315">25</text><text x="358" y="332">26</text><text x="358" y="349">27</text><text x="358" y="366">28</text><text x="358" y="383">29</text><text x="358" y="400">30</text><text x="358" y="417">31</text>
<text x="377" y="196" xml:space="preserve"><tspan class="k">union</tspan></text>
<text x="377" y="213" xml:space="preserve"><tspan class="k">select</tspan> <tspan class="n">8</tspan> <tspan class="k">as</tspan> category, <tspan class="n">95</tspan> <tspan class="k">as</tspan> s1, <tspan class="n">80</tspan> <tspan class="k">as</tspan> s2, <tspan class="n">75</tspan> <tspan class="k">as</tspan> s3, <tspan class="n">75</tspan> <tspan class="k">as</tspan> s4</text>
<text x="377" y="230" xml:space="preserve"><tspan class="k">union</tspan></text>
<text x="377" y="247" xml:space="preserve"><tspan class="k">select</tspan> <tspan class="n">9</tspan> <tspan class="k">as</tspan> category, <tspan class="n">10</tspan> <tspan class="k">as</tspan> s1, <tspan class="n">50</tspan> <tspan class="k">as</tspan> s2, <tspan class="n">75</tspan> <tspan class="k">as</tspan> s3, <tspan class="n">75</tspan> <tspan class="k">as</tspan> s4</text>
<text x="377" y="264" xml:space="preserve"><tspan class="k">union</tspan></text>
<text x="377" y="281" xml:space="preserve"><tspan class="k">select</tspan> <tspan class="n">10</tspan> <tspan class="k">as</tspan> category, <tspan class="n">70</tspan> <tspan class="k">as</tspan> s1, <tspan class="n">90</tspan> <tspan class="k">as</tspan> s2, <tspan class="n">75</tspan> <tspan class="k">as</tspan> s3, <tspan class="n">75</tspan> <tspan class="k">as</tspan> s4</text>
<text x="377" y="298"><tspan class="g">GO</tspan></text>
<text x="377" y="315" xml:space="preserve">.setResultSettings <tspan class="r">'Index=1,</tspan></text>
<text x="405" y="332" style="fill:#f00000">CategoryFields="[category]",</text>
<text x="405" y="349" style="fill:#f00000">SeriesFields="[s1],[s2]",</text>
<text x="405" y="366" style="fill:#f00000">ShowChart=true,</text>
<text x="405" y="383" style="fill:#f00000">ShowToolbar=true,</text>
<text x="405" y="400" style="fill:#f00000">Paging=true,</text>
<text x="405" y="417" style="fill:#f00000">Split=300,</text>
</g>

<!-- Editor scrollbar -->
<rect x="1298" y="182" width="17" height="242" fill="#f6f5f0"/>
<rect x="1299.500" y="183.500" width="14" height="15" rx="2" fill="url(#sb)" stroke="#fff"/>
<path d="M1303 193l3.500-3.500 3.500 3.500" fill="none" stroke="#48598a" stroke-width="2"/>
<rect x="1299.500" y="244.500" width="14" height="33" rx="2" fill="url(#sb)" stroke="#fff"/>
<rect x="1300" y="277" width="13" height="1" fill="#7ea4de"/>
<path d="M1303 257.500h7M1303 259.500h7M1303 261.500h7M1303 263.500h7" stroke="#edf2fd"/>
<rect x="1299.500" y="407.500" width="14" height="15" rx="2" fill="url(#sb)" stroke="#fff"/>
<path d="M1303 413l3.500 3.500 3.500-3.500" fill="none" stroke="#48598a" stroke-width="2"/>
<rect x="1300" y="422" width="13" height="1" fill="#7ea4de"/>
<rect x="1317.500" y="187.500" width="8" height="8" fill="#5cb85c" stroke="#fff"/>
<path d="M1317 419.500h9" stroke="#444"/><rect x="1320" y="418" width="3" height="3" fill="#444"/>

<!-- Editor status -->
<rect x="347.500" y="425.500" width="57" height="15" fill="none" stroke="#77766a"/>
<text x="364" y="437" textLength="22">81:1</text>
<rect x="406.500" y="425.500" width="26" height="15" fill="none" stroke="#77766a"/>
<text x="411" y="437" textLength="18">INS</text>
<rect x="434.500" y="425.500" width="892" height="15" fill="none" stroke="#77766a"/>
<path d="M830 443.500h1.500M833 443.500h1.500M836 443.500h1.500M839 443.500h1.500" stroke="#333" stroke-width="2"/>
<rect x="347" y="446" width="982" height="1" fill="#bfbfb8"/>

<!-- Right strip -->
<rect x="1335" y="73" width="25" height="642" fill="url(#side)"/>
<use href="#table" x="1341" y="77"/>
<text x="0" y="0" transform="translate(1344,97) rotate(90)" textLength="27" style="fill:#111">Detail</text>

<!-- Status bar -->
<rect y="715" width="1360" height="19" fill="#ece9d8"/>
<text x="3" y="729" textLength="535">Local Database Servers / NextGen Servers / SQL Server - Microsoft / SQL Server 2000 / Databases / Northwind</text>
<rect x="1077" y="717" width="1" height="17" fill="#a8a69a"/><rect x="1078" y="717" width="1" height="17" fill="#fff"/>
<rect x="1191" y="717" width="1" height="17" fill="#a8a69a"/>
<rect x="1193" y="717" width="67" height="17" fill="#e8e6ac"/>
<rect x="1260" y="717" width="1" height="17" fill="#444"/>
<text x="1237" y="729" textLength="22">64M</text>
<text x="1261" y="729" textLength="39">of 143M</text>
<rect x="1340" y="717" width="1" height="17" fill="#a8a69a"/>
<path d="M1345.500 720.500h11M1349 720v-1.500h4v1.500M1346.500 721l1 11.500h7l1-11.500" fill="#a8a8a4" stroke="#222"/>
<path d="M1349.500 723v8M1351 723v8M1352.500 723v8" stroke="#222" stroke-width=".7"/>
</svg>
</body></html>
